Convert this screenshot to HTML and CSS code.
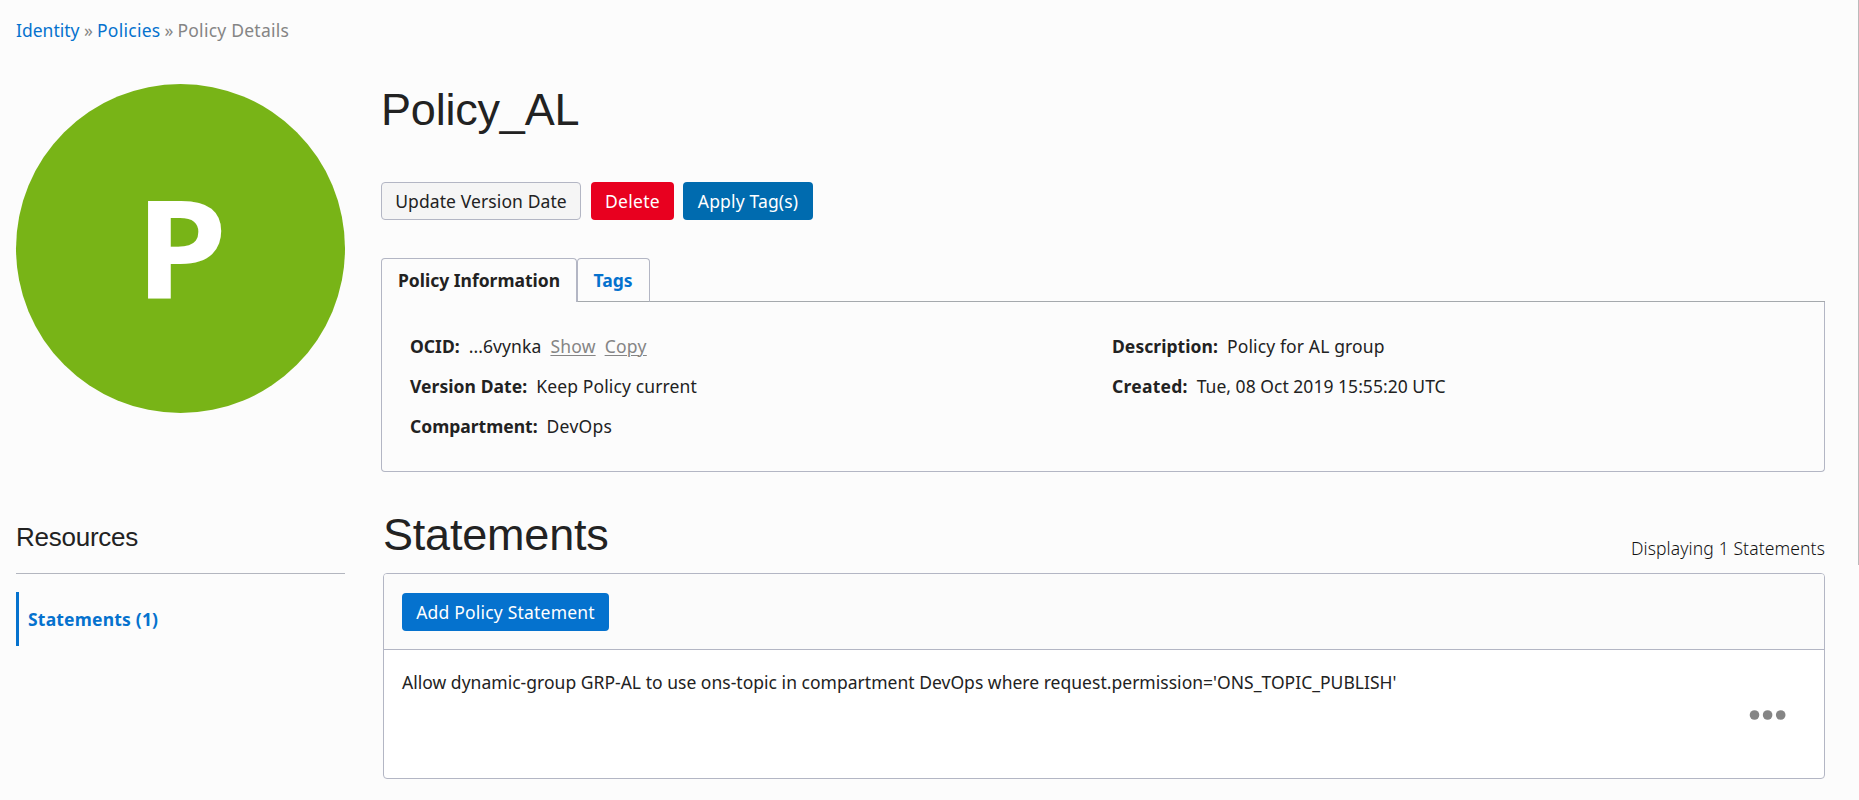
FILE: index.html
```
<!DOCTYPE html>
<html lang="en">
<head>
<meta charset="utf-8">
<title>Policy Details</title>
<link rel="stylesheet" href="styles.css">
</head>
<body>
<div class="page">
  <nav class="breadcrumb"><a class="crumb-identity">Identity</a><span>»</span><a class="crumb-policies">Policies</a><span>»</span><span class="crumb-current">Policy Details</span></nav>
  <div class="layout">
    <aside class="sidebar">
      <div class="avatar"><span class="initial">P</span></div>
      <h2 class="resources-title">Resources</h2>
      <ul class="resources"><li class="active">Statements (1)</li></ul>
    </aside>
    <main class="main">
      <h1 class="title">Policy_AL</h1>
      <div class="actions">
        <button class="btn btn-default">Update Version Date</button>
        <button class="btn btn-danger">Delete</button>
        <button class="btn btn-tag">Apply Tag(s)</button>
      </div>
      <div class="tabs">
        <div class="tab tab-active">Policy Information</div>
        <div class="tab tab-link">Tags</div>
        <div class="tab-rest"></div>
      </div>
      <div class="info">
        <div class="col">
          <div class="row"><b>OCID:</b><span class="ocid">...6vynka</span><a class="show">Show</a><a class="copy">Copy</a></div>
          <div class="row"><b class="wide">Version Date:</b><span class="medium">Keep Policy current</span></div>
          <div class="row"><b>Compartment:</b><span class="devops">DevOps</span></div>
        </div>
        <div class="col">
          <div class="row"><b class="wide">Description:</b><span class="medium">Policy for AL group</span></div>
          <div class="row"><b class="created">Created:</b><span class="date">Tue, 08 Oct 2019 15:55:20 UTC</span></div>
        </div>
      </div>
      <section class="statements">
        <header class="statements-head">
          <h1 class="title">Statements</h1>
          <span class="count">Displaying 1 Statements</span>
        </header>
        <div class="panel">
          <div class="toolbar"><button class="btn btn-primary">Add Policy Statement</button></div>
          <div class="statement">
            <p>Allow dynamic-group GRP-AL to use ons-topic in compartment DevOps where request.permission='ONS_TOPIC_PUBLISH'</p>
            <svg class="dots" width="38" height="12" viewBox="0 0 38 12"><circle cx="5.5" cy="6" r="4.8"/><circle cx="18.6" cy="6" r="4.8"/><circle cx="31.7" cy="6" r="4.8"/></svg>
          </div>
        </div>
      </section>
    </main>
  </div>
  <div class="edge"></div>
</div>
</body>
</html>
```
FILE: styles.css
```
* { box-sizing: border-box; }
body {
  margin: 0;
  background: #fcfcfc;
  color: #222;
  font: 17.5px/24px "Noto Sans", sans-serif;
}
h1, h2, p, ul { margin: 0; padding: 0; font-weight: 400; }
.page { position: relative; height: 800px; overflow: hidden; padding: 18px 34px 0 16px; }
.edge { position: absolute; top: 0; right: 0; width: 1px; height: 565px; background: #bbb; }

.breadcrumb { display: flex; gap: 4px; height: 24px; color: #858585; }
.breadcrumb a { color: #0572ce; }
.crumb-identity { width: 64px; }
.crumb-policies { letter-spacing: .28px; }
.crumb-current { letter-spacing: .24px; }

.layout { display: flex; gap: 36px; padding-top: 42px; }
.sidebar { width: 329px; flex: none; }
.avatar {
  width: 329px; height: 329px; border-radius: 50%;
  background: #78b417; color: #fff;
  font-size: 137px; line-height: 321px; font-weight: 700; text-align: center;
  padding: 2px 0 0 2px;
}
.initial { display: inline-block; transform: scaleX(1.08); }
.resources-title {
  font: 26px/30px "Liberation Sans", sans-serif; letter-spacing: -.25px;
  height: 52px; margin-top: 109px; border-bottom: 1px solid #b3b6bf; white-space: nowrap;
}
.resources { list-style: none; padding-top: 18px; }
.active {
  height: 54px; line-height: 54px; border-left: 3px solid #0572ce; padding-left: 9px;
  color: #0572ce; font-weight: 700; letter-spacing: .2px;
}

.main { flex: 1; min-width: 0; }
.title { font: 45px/52px "Liberation Sans", sans-serif; letter-spacing: -.2px; }
.actions { display: flex; padding-top: 46px; }
.btn {
  height: 38px; padding: 0; border: 0; border-radius: 4px; color: #fff;
  font: 17.5px/24px "Noto Sans", sans-serif;
}
.btn-default { width: 200px; margin-right: 10px; background: #f5f5f5; color: #222; border: 1px solid #b3b6c4; letter-spacing: .1px; }
.btn-danger { width: 83px; margin-right: 9px; background: #e8001f; letter-spacing: .3px; }
.btn-tag { width: 130px; background: #006baf; letter-spacing: .15px; }
.btn-primary { width: 207px; background: #0572ce; letter-spacing: .2px; }

.tabs { display: flex; margin-top: 38px; height: 44px; }
.tab { border: 1px solid #b3b6c4; border-radius: 4px 4px 0 0; font-weight: 700; text-align: center; line-height: 43px; }
.tab-active { width: 196px; border-bottom: 0; }
.tab-link { width: 73px; padding-right: 1px; color: #0572ce; border-bottom-color: #a5a9ad; }
.tab-rest { flex: 1; border-bottom: 1px solid #a5a9ad; }
.info {
  display: flex; height: 170px; padding: 24px 0 0 28px;
  border: 1px solid #b3b6c4; border-top: 0; border-radius: 0 0 4px 4px;
}
.col { width: 702px; }
.row { display: flex; gap: 9px; height: 40px; line-height: 40px; white-space: nowrap; }
.row a { color: #858585; text-decoration: underline; text-decoration-thickness: 1px; text-underline-offset: 2px; }
.ocid { letter-spacing: .1px; }
.show { letter-spacing: .2px; }
.copy { letter-spacing: .3px; }
.wide { letter-spacing: .06px; }
.medium { letter-spacing: .13px; }
.devops { letter-spacing: .25px; }
.created { letter-spacing: .25px; }
.date { letter-spacing: .03px; }

.statements { padding: 37px 0 0 2px; }
.statements-head { display: flex; justify-content: space-between; height: 64px; }
.count { font-weight: 300; letter-spacing: .12px; padding-top: 27px; color: #111; }
.panel { height: 206px; border: 1px solid #b3b6c4; border-radius: 4px; background: #fff; overflow: hidden; }
.toolbar { height: 76px; padding: 19px 0 0 18px; background: #fbfbfb; border-bottom: 1px solid #b3b6c4; }
.statement { display: flex; justify-content: space-between; padding: 20px 37px 0 18px; letter-spacing: .02px; white-space: nowrap; }
.dots { margin-top: 39px; fill: #858585; }
```
